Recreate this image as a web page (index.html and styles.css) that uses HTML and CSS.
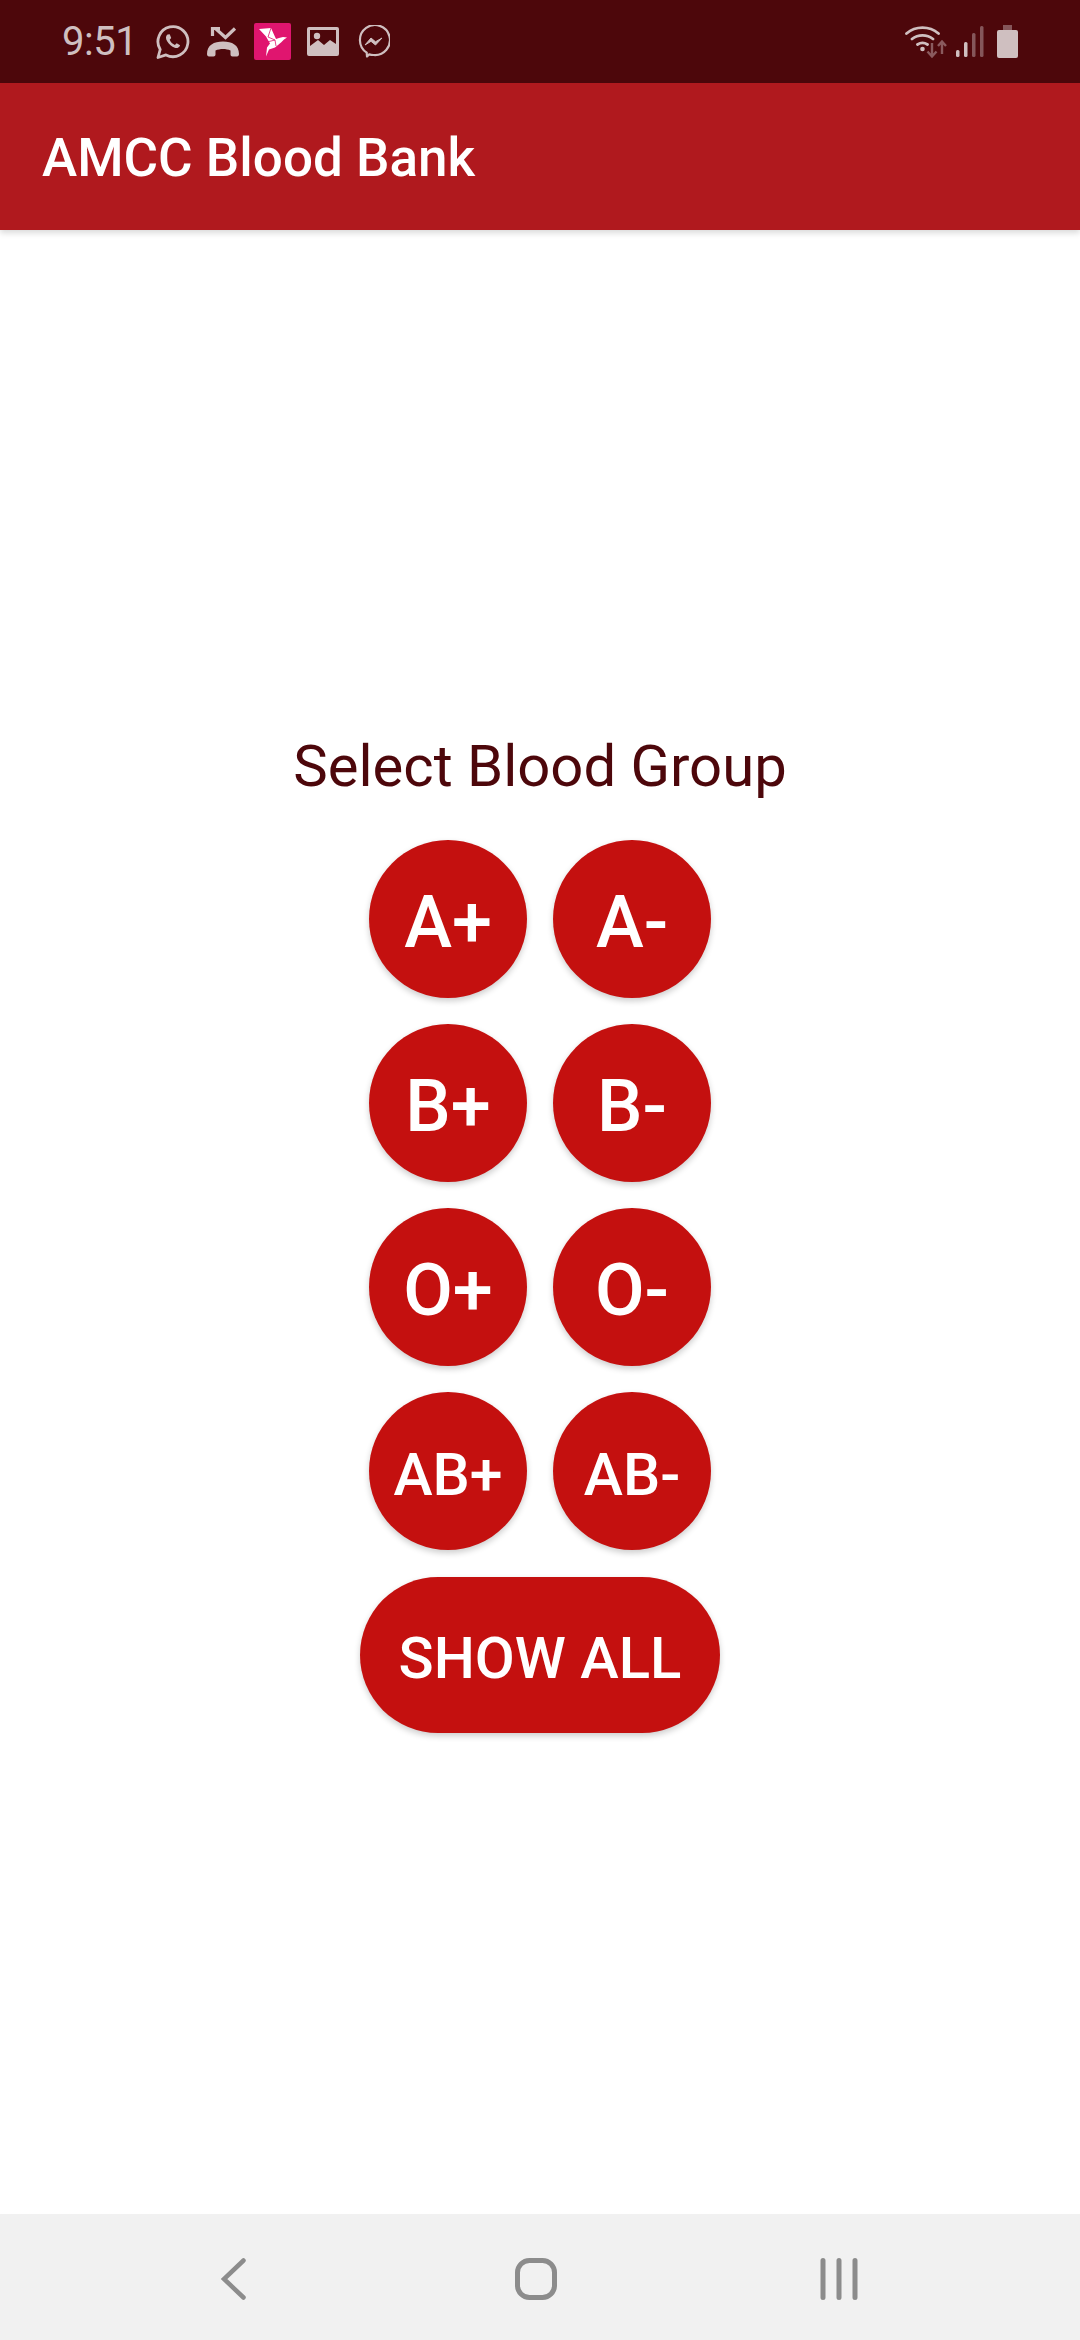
FILE: index.html
```html
<!DOCTYPE html>
<html lang="en">
<head>
    <meta charset="UTF-8">
    <meta name="viewport" content="width=device-width, initial-scale=1.0">
    <title>AMCC Blood Bank</title>
    <link rel="stylesheet" href="styles.css">
</head>
<body>
    <div class="status-bar">
        <span class="clock">9:51</span>
        <svg class="icon whatsapp" width="34" height="34" viewBox="0 0 34 34">
            <path d="M2 32.500l2.200-8A15 15 0 1 1 10 29.900z" fill="none" stroke="#cfbfc0" stroke-width="2.800" stroke-linejoin="round"/>
            <path d="M11.500 9.500c-2 1.600-2 4.200-.2 7 1.800 3 4.300 5.200 7.500 6.300 2.300.7 4.700-.3 5.300-2.600l-3.400-1.900-1.800 1.700c-2.300-.9-4.300-2.900-5.200-5.200l1.500-1.800-1.500-3.700z" fill="#cfbfc0"/>
        </svg>
        <svg class="icon missed" width="32" height="30" viewBox="0 0 32 30">
            <path d="M28 1.500L18.500 10.500 8.500 1.500M5.500 9V1.500H13" fill="none" stroke="#cfbfc0" stroke-width="3.200"/>
            <path d="M0 27c0-9 7-12.500 16-12.500S32 18 32 27c0 1.500-.8 2.500-2 2.500h-4.500c-1.200 0-2-.8-2-2v-4c-4.500-2-10.500-2-15 0v4c0 1.200-.8 2-2 2H2c-1.200 0-2-1-2-2.500z" fill="#cfbfc0"/>
        </svg>
        <svg class="icon bird" width="37" height="37" viewBox="0 0 37 37">
            <rect width="37" height="37" rx="2" fill="#e0156f"/>
            <path d="M5 6l12-1 5 11 3-1 4-1 4 .5-3 2-3 3-6 5-6 2-3 7 1-9 3-4-4-7z" fill="#fff"/>
            <path d="M17 5l-3 9 7 3M13 19l8-2 1 6" fill="none" stroke="#e0156f" stroke-width=".8"/>
        </svg>
        <svg class="icon gallery" width="32" height="29" viewBox="0 0 32 29">
            <path fill-rule="evenodd" d="M2 0h28a2 2 0 0 1 2 2v25a2 2 0 0 1-2 2H2a2 2 0 0 1-2-2V2a2 2 0 0 1 2-2zM3 3v16l8-6 6 5 6-5 6 4V3z" fill="#cfbfc0"/>
            <circle cx="10" cy="9" r="3.200" fill="#cfbfc0"/>
        </svg>
        <svg class="icon messenger" width="33" height="33" viewBox="0 0 33 33">
            <path d="M10 31.500l-.3-3.900A15 15 0 1 1 16.500 30c-1.500 0-3-.2-4.300-.6z" fill="none" stroke="#cfbfc0" stroke-width="2.200" stroke-linejoin="round"/>
            <path d="M8 20l6-7 4.500 3.800L25 13l-6.500 7-4.500-3.700z" fill="#cfbfc0" stroke="#cfbfc0" stroke-width="1" stroke-linejoin="round"/>
        </svg>

        <div class="status-right">
            <svg class="icon wifi" width="44" height="34" viewBox="0 0 44 34">
                <path d="M1.500 8.500a25 25 0 0 1 32 0M7 14a17 17 0 0 1 21 0M12.500 19.500a9 9 0 0 1 10 0" fill="none" stroke="#cfbfc0" stroke-width="2.800" stroke-linecap="round"/>
                <circle cx="17.500" cy="24" r="2.300" fill="#cfbfc0"/>
                <path d="M27 18v13M22.500 26.500l4.500 5 4.500-5M37 29V17M33 21l4-4.500 4 4.500" fill="none" stroke="#8a5a5e" stroke-width="2.400"/>
            </svg>
            <svg class="icon signal" width="28" height="31" viewBox="0 0 28 31">
                <rect x="0" y="24" width="3.500" height="7" rx="1.500" fill="#cfbfc0"/>
                <rect x="8" y="16" width="3.500" height="15" rx="1.500" fill="#cfbfc0"/>
                <rect x="16" y="7" width="3.500" height="24" rx="1.500" fill="#85565a"/>
                <rect x="24" y="0" width="3.500" height="31" rx="1.500" fill="#85565a"/>
            </svg>
            <svg class="icon battery" width="21" height="33" viewBox="0 0 21 33">
                <path d="M6 0h9v5H6z" fill="#85565a"/>
                <path d="M2 5h17a2 2 0 0 1 2 2v24a2 2 0 0 1-2 2H2a2 2 0 0 1-2-2V7a2 2 0 0 1 2-2z" fill="#cfbfc0"/>
            </svg>
        </div>
    </div>

    <header class="toolbar">
        <h1>AMCC Blood Bank</h1>
    </header>

    <main class="content">
        <h2>Select Blood Group</h2>
        <div class="groups">
            <button type="button" class="round">A+</button>
            <button type="button" class="round">A-</button>
            <button type="button" class="round">B+</button>
            <button type="button" class="round">B-</button>
            <button type="button" class="round">O+</button>
            <button type="button" class="round">O-</button>
            <button type="button" class="round small">AB+</button>
            <button type="button" class="round small">AB-</button>
        </div>
        <button type="button" class="show-all">SHOW ALL</button>
    </main>

    <nav class="nav-bar">
        <svg class="nav-back" width="25" height="42" viewBox="0 0 25 42">
            <path d="M22.500 2.500L3 21l19.500 18.500" fill="none" stroke="#8c8c8c" stroke-width="4.500" stroke-linecap="round"/>
        </svg>
        <svg class="nav-home" width="42" height="42" viewBox="0 0 42 42">
            <rect x="2.500" y="2.500" width="37" height="37" rx="12" fill="none" stroke="#8c8c8c" stroke-width="5"/>
        </svg>
        <svg class="nav-recent" width="38" height="42" viewBox="0 0 38 42">
            <path d="M3 2.500v37M19 2.500v37M35 2.500v37" fill="none" stroke="#8c8c8c" stroke-width="5" stroke-linecap="round"/>
        </svg>
    </nav>
</body>
</html>
```

FILE: styles.css
```css
* {
    box-sizing: border-box;
}

body {
    margin: 0;
    height: 2340px;
    display: flex;
    flex-direction: column;
    font-family: Roboto, "Liberation Sans", sans-serif;
    background-color: #fff;
    overflow: hidden;
}

.status-bar {
    height: 83px;
    flex-shrink: 0;
    display: flex;
    align-items: center;
    padding: 0 62px 0 62px;
    background-color: #4d070b;
    color: #cfbfc0;
}

.clock {
    font-size: 40px;
    letter-spacing: -0.5px;
    width: 94px;
}

.icon {
    display: block;
    flex-shrink: 0;
}

.missed {
    margin-left: 17px;
}

.bird {
    margin-left: 15px;
}

.gallery {
    margin-left: 16px;
}

.messenger {
    margin-left: 18px;
}

.status-right {
    margin-left: auto;
    display: flex;
    align-items: center;
}

.signal {
    margin-left: 7px;
}

.battery {
    margin-left: 13px;
}

.toolbar {
    height: 147px;
    flex-shrink: 0;
    display: flex;
    align-items: center;
    padding: 2px 0 0 42px;
    background-color: #b0191e;
    box-shadow: 0 3px 6px rgba(0, 0, 0, 0.15);
    position: relative;
}

.toolbar h1 {
    margin: 0;
    color: #fff;
    font-size: 53px;
    font-weight: 500;
}

.content {
    flex: 1;
    display: flex;
    flex-direction: column;
    align-items: center;
    padding-top: 497px;
}

.content h2 {
    margin: 0 0 35px;
    color: #4d070b;
    font-size: 58px;
    font-weight: 400;
    line-height: 78px;
}

.groups {
    display: grid;
    grid-template-columns: 158px 158px;
    gap: 26px;
}

button {
    border: none;
    padding: 0;
    color: #fff;
    font-family: inherit;
    font-weight: 500;
    background-color: #c4100f;
    box-shadow: 0 3px 6px rgba(0, 0, 0, 0.2);
}

.round {
    width: 158px;
    height: 158px;
    padding-top: 6px;
    border-radius: 50%;
    font-size: 72px;
}

.round.small {
    font-size: 59px;
}

.show-all {
    width: 360px;
    height: 156px;
    margin-top: 27px;
    padding-top: 5px;
    border-radius: 78px;
    font-size: 58px;
}

.nav-bar {
    height: 126px;
    flex-shrink: 0;
    display: flex;
    align-items: center;
    padding: 3px 0 0 221px;
    background-color: #f1f1f1;
}

.nav-home {
    margin-left: 269px;
}

.nav-recent {
    margin-left: 263px;
}
```
